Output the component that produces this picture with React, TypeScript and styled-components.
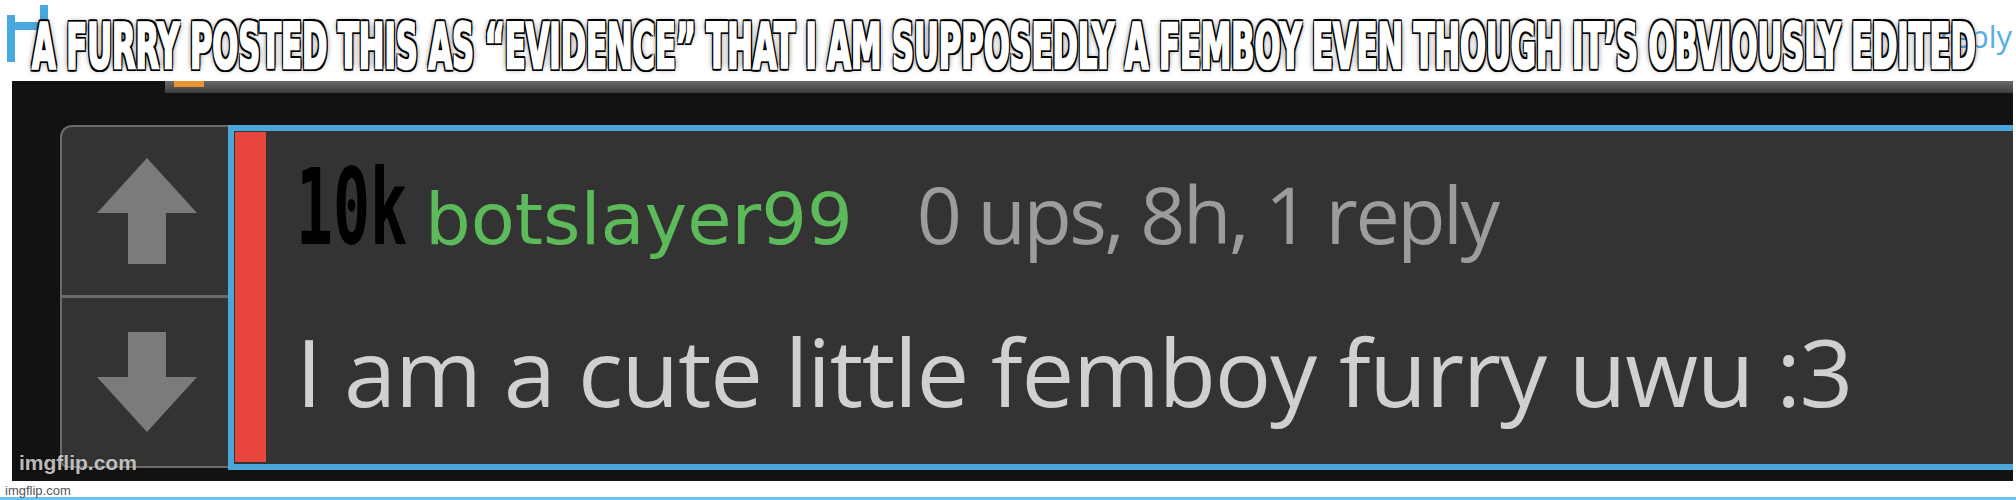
import React, { useLayoutEffect, useRef, useState } from 'react';
import styled, { createGlobalStyle } from 'styled-components';

const CAPTION_WIDTH = 1944;

const GlobalStyle = createGlobalStyle`
  html, body {
    margin: 0;
    padding: 0;
    background: #fff;
    overflow: hidden;
  }
`;

const Page = styled.div`
  position: relative;
  width: 2016px;
  height: 500px;
  display: flex;
  flex-direction: column;
  background: #fff;
  overflow: hidden;
`;

const Header = styled.div`
  height: 81px;
  display: flex;
  justify-content: space-between;
  align-items: flex-start;
  padding: 0 4px 0 7px;
  box-sizing: border-box;
`;

const ReplyHint = styled.span`
  margin-top: 21px;
  font-family: 'Open Sans', sans-serif;
  font-size: 31px;
  line-height: 1;
  color: #5aaee0;
`;

const CaptionWrap = styled.div`
  position: absolute;
  top: 16px;
  left: 32px;
  z-index: 2;
  white-space: nowrap;
`;

const CaptionText = styled.span`
  display: inline-block;
  transform-origin: left top;
  font-family: 'Liberation Sans Narrow', 'DejaVu Sans Condensed', 'Liberation Sans', sans-serif;
  font-weight: 700;
  font-size: 62px;
  line-height: 1;
  color: #fff;
  -webkit-text-stroke: 2.5px #fff;
  text-shadow:
    3px 3px 0 #000, -3px -3px 0 #000, 3px -3px 0 #000, -3px 3px 0 #000,
    0 3px 0 #000, 0 -3px 0 #000, 3px 0 0 #000, -3px 0 0 #000,
    0 0 9px rgba(0, 0, 0, 0.85);
`;

const Panel = styled.div`
  position: relative;
  margin-left: 12px;
  width: 2001px;
  height: 401px;
  background: #121212;
  display: flex;
  flex-direction: column;
`;

const TopStrip = styled.div`
  height: 12px;
  margin-left: 153px;
  background: linear-gradient(#6a6a6a, #3c3c3c);
  display: flex;
`;

const OrangeTab = styled.div`
  width: 30px;
  height: 6px;
  margin-left: 9px;
  background: #e8952f;
`;

const Row = styled.div`
  display: flex;
  align-items: flex-start;
  margin-top: 32px;
  padding-left: 48px;
`;

const VoteBox = styled.div`
  width: 168px;
  height: 343px;
  box-sizing: border-box;
  border: 2px solid #6b6b6b;
  border-right: none;
  border-radius: 12px 0 0 8px;
  background: #333;
  display: flex;
  flex-direction: column;
`;

const VoteHalf = styled.div`
  flex: 1;
  display: flex;
  align-items: center;
  justify-content: center;
  padding-left: 4px;
`;

const Divider = styled.div`
  height: 3px;
  background: #6b6b6b;
`;

const CommentBox = styled.div`
  flex: 1;
  height: 345px;
  box-sizing: border-box;
  border: 6px solid #4ba7d9;
  border-right: none;
  background: #333;
  display: flex;
`;

const RedBar = styled.div`
  width: 31px;
  margin: 1px 0 2px 1px;
  background: #e8453c;
`;

const TextCol = styled.div`
  padding: 24px 0 0 30px;
  display: flex;
  flex-direction: column;
`;

const HeadLine = styled.div`
  height: 110px;
  display: flex;
  align-items: baseline;
  white-space: nowrap;
`;

const ScoreBox = styled.span`
  display: inline-block;
  width: 111px;
`;

const Score = styled.span`
  display: inline-block;
  transform: scaleX(0.58);
  transform-origin: left;
  font-family: 'DejaVu Sans Mono', monospace;
  font-weight: 700;
  font-size: 106px;
  line-height: 1;
  color: #000;
`;

const Username = styled.span`
  margin-left: 18px;
  font-family: 'DejaVu Sans', sans-serif;
  font-size: 72px;
  line-height: 1;
  color: #5dba5a;
`;

const Meta = styled.span`
  margin-left: 64px;
  font-family: 'Open Sans', sans-serif;
  font-size: 79px;
  letter-spacing: -2.5px;
  line-height: 1;
  color: #9c9c9c;
`;

const Body = styled.div`
  margin-top: 59px;
  font-family: 'Open Sans', sans-serif;
  font-size: 94px;
  letter-spacing: -1.3px;
  line-height: 1;
  color: #d0d0d0;
  white-space: nowrap;
`;

const Watermark = styled.span`
  position: absolute;
  left: 7px;
  bottom: 8px;
  font-family: 'Liberation Sans', sans-serif;
  font-weight: 700;
  font-size: 21px;
  line-height: 1;
  color: rgba(235, 235, 235, 0.8);
  text-shadow: 0 0 2px rgba(0, 0, 0, 0.6);
`;

const Footer = styled.div`
  flex: 1;
  display: flex;
  flex-direction: column;
  justify-content: space-between;
  border-bottom: 3px solid #6cc2ee;
`;

const FooterMark = styled.span`
  padding: 3px 0 0 5px;
  font-family: 'Liberation Sans', sans-serif;
  font-size: 13px;
  line-height: 1;
  color: #555;
`;

const Logo = () => (
  <svg width="50" height="62" viewBox="0 0 50 62">
    <rect x="0" y="15" width="8" height="47" fill="#4aa8e0" />
    <rect x="0" y="22" width="32" height="8" fill="#4aa8e0" />
    <rect x="33" y="5" width="8" height="57" fill="#4aa8e0" />
  </svg>
);

const ArrowUp = () => (
  <svg width="100" height="106" viewBox="0 0 100 106">
    <polygon points="50,0 100,55 69,55 69,106 31,106 31,55 0,55" fill="#7b7b7b" />
  </svg>
);

const ArrowDown = () => (
  <svg width="100" height="100" viewBox="0 0 100 100">
    <polygon points="31,0 69,0 69,45 100,45 50,100 0,45 31,45" fill="#7b7b7b" />
  </svg>
);

const Caption = ({ children }: { children: string }) => {
  const ref = useRef<HTMLSpanElement>(null);
  const [scale, setScale] = useState(1);

  useLayoutEffect(() => {
    const fit = () => {
      if (ref.current) setScale(CAPTION_WIDTH / ref.current.offsetWidth);
    };
    fit();
    document.fonts?.ready.then(fit);
  }, []);

  return (
    <CaptionWrap>
      <CaptionText ref={ref} style={{ transform: `scaleX(${scale})` }}>
        {children}
      </CaptionText>
    </CaptionWrap>
  );
};

const App = () => (
  <Page>
    <GlobalStyle />
    <Header>
      <Logo />
      <ReplyHint>reply</ReplyHint>
    </Header>
    <Caption>
      A FURRY POSTED THIS AS “EVIDENCE” THAT I AM SUPPOSEDLY A FEMBOY EVEN THOUGH IT’S OBVIOUSLY EDITED
    </Caption>
    <Panel>
      <TopStrip>
        <OrangeTab />
      </TopStrip>
      <Row>
        <VoteBox>
          <VoteHalf>
            <ArrowUp />
          </VoteHalf>
          <Divider />
          <VoteHalf>
            <ArrowDown />
          </VoteHalf>
        </VoteBox>
        <CommentBox>
          <RedBar />
          <TextCol>
            <HeadLine>
              <ScoreBox>
                <Score>10k</Score>
              </ScoreBox>
              <Username>botslayer99</Username>
              <Meta>0 ups, 8h, 1 reply</Meta>
            </HeadLine>
            <Body>I am a cute little femboy furry uwu :3</Body>
          </TextCol>
        </CommentBox>
      </Row>
      <Watermark>imgflip.com</Watermark>
    </Panel>
    <Footer>
      <FooterMark>imgflip.com</FooterMark>
    </Footer>
  </Page>
);

export default App;
